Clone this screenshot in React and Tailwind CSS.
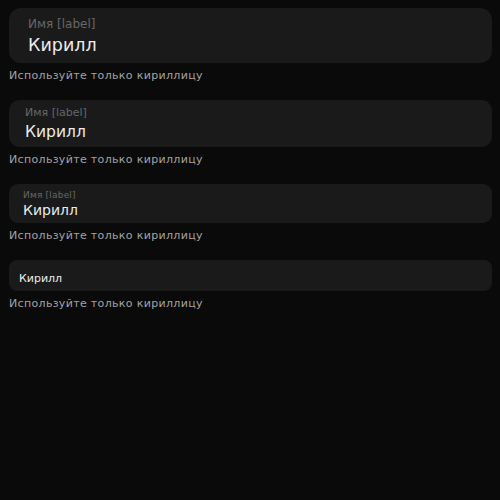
const font = { fontFamily: '"DejaVu Sans", sans-serif' };

function Field({ size, value, label }) {
  const cfg = {
    lg: {
      box: "h-[55px] rounded-[12px] pl-[19px] pt-[8px]",
      label: "text-[12px] leading-[16px]",
      value: "text-[17.5px] leading-[24px] mt-[1px]",
    },
    md: {
      box: "h-[47px] rounded-[11px] pl-[16px] pt-[6px]",
      label: "text-[11px] leading-[14px]",
      value: "text-[15.5px] leading-[20px] mt-[2px]",
    },
    sm: {
      box: "h-[39px] rounded-[9px] pl-[14px] pt-[5px]",
      label: "text-[9px] leading-[12px] tracking-[0.2px]",
      value: "text-[14px] leading-[18px]",
    },
  }[size];

  return (
    <div className={"bg-[#1a1a1a] flex flex-col " + cfg.box}>
      <span className={"text-[#676767] " + cfg.label}>{label}</span>
      <span className={"text-[#ececec] " + cfg.value}>{value}</span>
    </div>
  );
}

function Helper({ className }) {
  return (
    <p className={"text-[11px] leading-[16px] tracking-[0.33px] text-[#a3a3a3] " + className}>
      Используйте только кириллицу
    </p>
  );
}

export default function App() {
  return (
    <div
      className="min-h-screen bg-[#0a0a0a] pt-2 pl-[9px] pr-2"
      style={font}
    >
      <Field size="lg" label="Имя [label]" value="Кирилл" />
      <Helper className="mt-[5px]" />

      <div className="mt-[16px]">
        <Field size="md" label="Имя [label]" value="Кирилл" />
      </div>
      <Helper className="mt-[5px]" />

      <div className="mt-[16px]">
        <Field size="sm" label="Имя [label]" value="Кирилл" />
      </div>
      <Helper className="mt-[5px]" />

      <div className="mt-[16px] h-[31px] rounded-[8px] bg-[#1a1a1a] pl-[10px] pt-[5px]">
        <span className="text-[11px] leading-[16px] text-[#ececec]">Кирилл</span>
      </div>
      <Helper className="mt-[5px]" />
    </div>
  );
}
